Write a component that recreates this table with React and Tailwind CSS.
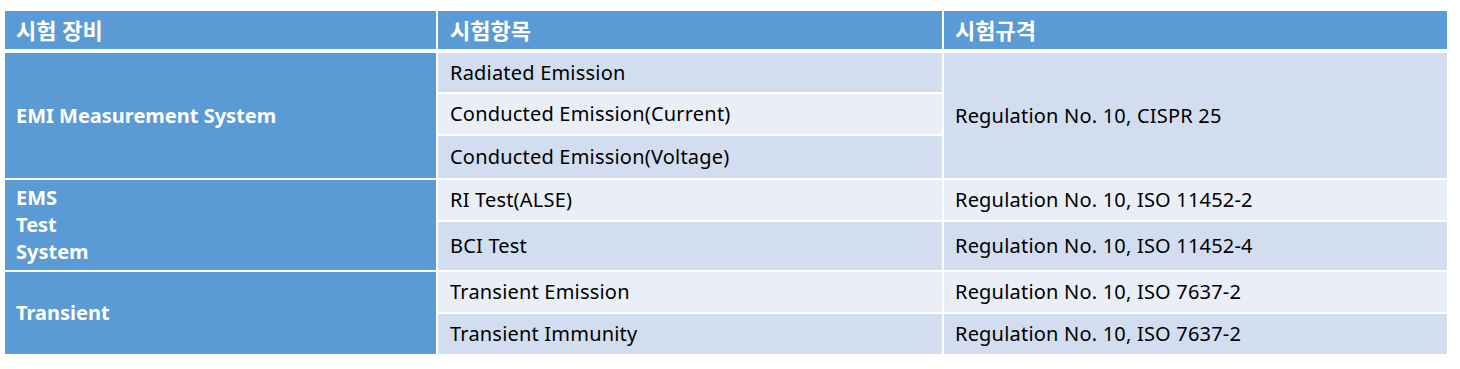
import React from "react";

const font = { fontFamily: '"Noto Sans", "Noto Sans CJK KR", sans-serif' };

function App() {
  const cell = "flex items-center text-[20px] tracking-[0.2px] text-black pl-3";
  const head = "bg-[#5b9bd5] text-white font-bold text-[20px] flex items-center";
  const title = "bg-[#5b9bd5] text-white font-bold text-[22px] flex items-center";
  const dark = "bg-[#d2deef]";
  const light = "bg-[#eaeff7]";

  return (
    <div className="w-[1460px] h-[369px] bg-white pt-[11px] pl-[5px]" style={font}>
      {/* header */}
      <div className="grid grid-cols-[431px_504px_503px] gap-x-[2px] h-[38px]">
        <div className={`${title} pl-[11px]`}>시험 장비</div>
        <div className={`${title} pl-3`}>시험항목</div>
        <div className={`${title} pl-[11px]`}>시험규격</div>
      </div>

      {/* body */}
      <div className="mt-[4px] grid grid-cols-[431px_504px_503px] grid-rows-[39px_40px_42px_40px_48px_40px_40px] gap-[2px]">
        <div className={`row-span-3 ${head} pl-[11px]`}>EMI Measurement System</div>
        <div className={`${cell} ${dark}`}>Radiated Emission</div>
        <div className={`row-span-3 ${cell} ${dark} pl-[11px]`}>Regulation No. 10, CISPR 25</div>
        <div className={`${cell} ${light}`}>Conducted Emission(Current)</div>
        <div className={`${cell} ${dark}`}>Conducted Emission(Voltage)</div>

        <div className="row-span-2 bg-[#5b9bd5] text-white font-bold text-[20px] flex flex-col justify-center pl-[11px] leading-[27px] pb-[2px]">
          <span>EMS</span>
          <span>Test</span>
          <span>System</span>
        </div>
        <div className={`${cell} ${light}`}>RI Test(ALSE)</div>
        <div className={`${cell} ${light} pl-[11px]`}>Regulation No. 10, ISO 11452-2</div>
        <div className={`${cell} ${dark}`}>BCI Test</div>
        <div className={`${cell} ${dark} pl-[11px]`}>Regulation No. 10, ISO 11452-4</div>

        <div className={`row-span-2 ${head} pl-[11px]`}>Transient</div>
        <div className={`${cell} ${light}`}>Transient Emission</div>
        <div className={`${cell} ${light} pl-[11px]`}>Regulation No. 10, ISO 7637-2</div>
        <div className={`${cell} ${dark}`}>Transient Immunity</div>
        <div className={`${cell} ${dark} pl-[11px]`}>Regulation No. 10, ISO 7637-2</div>
      </div>
    </div>
  );
}

export default App;
